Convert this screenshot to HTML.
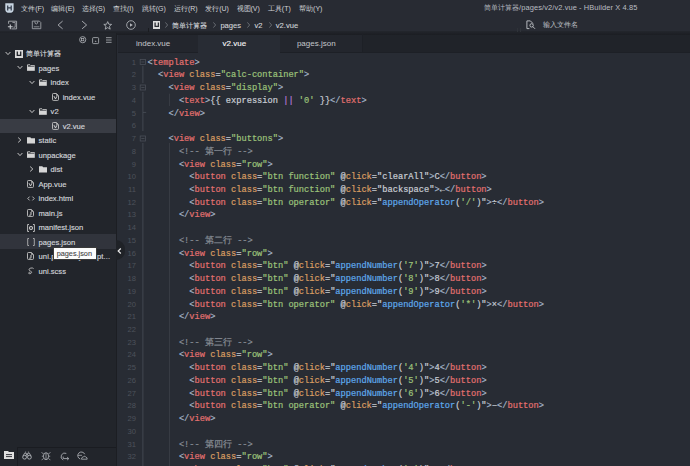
<!DOCTYPE html>
<html><head><meta charset="utf-8">
<style>
*{margin:0;padding:0;box-sizing:border-box}
html,body{width:690px;height:466px;overflow:hidden;background:#282c34;font-family:"Liberation Sans",sans-serif}
.abs{position:absolute}
#top{position:absolute;left:0;top:0;width:690px;height:31px;background:#282b33}
#band{position:absolute;left:0;top:31px;width:690px;height:3.5px;background:linear-gradient(#23262c,#1b1d22)}
.mi{position:absolute;top:3.6px;font-size:7px;line-height:10px;color:#d0d2d6;white-space:nowrap}
#title{position:absolute;left:483.6px;top:3.3px;font-size:7.45px;letter-spacing:0.1px;line-height:10px;color:#b9bcc1;white-space:nowrap}
#side{position:absolute;left:0;top:33px;width:116px;height:433px;background:#22252b}
#sideborder{position:absolute;left:116px;top:33px;width:1.2px;height:433px;background:#1c1e23}
.tt{position:absolute;-webkit-text-stroke:0.15px;font-size:7.6px;line-height:12px;color:#d2d5da;white-space:nowrap}
#tabs{position:absolute;left:117.5px;top:34.5px;width:572.5px;height:17px;background:#202329}
#tabline{position:absolute;left:117.5px;top:51.5px;width:572.5px;height:1px;background:#1d2026}
.tab{position:absolute;top:34.5px;height:17px;font-size:8px;line-height:18.6px;text-align:center;padding-right:9.5px;color:#a8abb1;white-space:nowrap}
#editor{position:absolute;left:117.5px;top:52.5px;width:572.5px;height:414px;background:#282c34}
.cl{position:absolute;-webkit-text-stroke:0.2px;left:147.60px;height:12.73px;line-height:12.73px;font-family:"Liberation Mono",monospace;font-size:8.700px;white-space:pre;color:#c8ccd4}
.ln{position:absolute;left:116px;width:20px;text-align:right;height:12.73px;line-height:12.4px;font-family:"Liberation Sans",sans-serif;font-size:7.6px;color:#4d525b}
.p{color:#a3b3c6}.t{color:#e2706f}.a{color:#d99d62}.s{color:#9cc27a}.q{color:#c8ccd4}.c{color:#878c94}.f{color:#5fa9ec}.u{color:#b77ad6}
</style></head><body>
<div id="top"></div>
<div id="band"></div>
<!-- HBuilder logo -->
<svg class="abs" style="left:4.6px;top:2.8px" width="9" height="10" viewBox="0 0 9 10"><path d="M0.3 0.2H8.6V6.4Q8.6 9.8 4.45 9.8Q0.3 9.8 0.3 6.4Z" fill="#c6d3e0"/><path d="M2.7 2.6V7.6M6.2 2.6V7.6M2.7 4.9H6.2" stroke="#2f3848" stroke-width="1.2"/></svg>
<div class="mi" style="left:21.2px">文件(F)</div><div class="mi" style="left:51.3px">编辑(E)</div><div class="mi" style="left:81.7px">选择(S)</div><div class="mi" style="left:113.0px">查找(I)</div><div class="mi" style="left:141.7px">跳转(G)</div><div class="mi" style="left:173.9px">运行(R)</div><div class="mi" style="left:205.2px">发行(U)</div><div class="mi" style="left:236.5px">视图(V)</div><div class="mi" style="left:267.8px">工具(T)</div><div class="mi" style="left:299.1px">帮助(Y)</div>
<div id="title">简单计算器/pages/v2/v2.vue - HBuilder X 4.85</div>
<!-- toolbar icons -->
<svg class="abs" style="left:7px;top:20px" width="11" height="10" viewBox="0 0 11 10"><path d="M1.6 3.8V1.2H9.6V8.9H4.4" stroke="#a9acb1" stroke-width="0.9" fill="none"/><path d="M5.4 2.5H8.2V7.2H6.4" stroke="#a9acb1" stroke-width="0.8" fill="none"/><path d="M0.9 6.8H5.7M3.3 4.4V9.2" stroke="#c4c7cc" stroke-width="1.1"/></svg>
<svg class="abs" style="left:31px;top:20px" width="11" height="10" viewBox="0 0 11 10"><path d="M1.3 1.1H8.4L9.8 2.5V8.7H1.3Z" stroke="#9da0a6" stroke-width="0.9" fill="none"/><path d="M3.8 1.5Q3.8 4 5.3 4Q6.8 4 6.8 1.5" stroke="#9da0a6" stroke-width="0.9" fill="none"/><path d="M2.8 6.8H8.4" stroke="#9da0a6" stroke-width="0.8"/></svg>
<svg class="abs" style="left:57px;top:20px" width="7" height="10" viewBox="0 0 7 10"><path d="M5.6 1.1L1.1 5L5.6 8.8" stroke="#b4b7bc" stroke-width="0.9" fill="none"/></svg>
<svg class="abs" style="left:80.6px;top:20px" width="7" height="10" viewBox="0 0 7 10"><path d="M1.1 1.1L5.6 5L1.1 8.8" stroke="#b4b7bc" stroke-width="0.9" fill="none"/></svg>
<svg class="abs" style="left:103.4px;top:20.6px" width="10" height="9" viewBox="0 0 10 9"><path d="M4.7 0.6L5.8 3.2L8.6 3.4L6.4 5.2L7.2 8.2L4.7 6.6L2.2 8.2L3 5.2L0.8 3.4L3.6 3.2Z" stroke="#b4b7bc" stroke-width="0.85" fill="none"/></svg>
<svg class="abs" style="left:126.4px;top:20px" width="10" height="10" viewBox="0 0 10 10"><circle cx="5" cy="5" r="4.3" stroke="#b4b7bc" stroke-width="0.85" fill="none"/><path d="M4 3.2V6.8L6.8 5Z" fill="#b4b7bc"/></svg>
<div class="abs" style="left:148.2px;top:27.8px;width:0.8px;height:4px;background:#1a1c20"></div>
<!-- breadcrumb -->
<svg class="abs" style="left:152.7px;top:21px" width="7.5" height="8" viewBox="0 0 7.5 8"><rect width="7.5" height="8" fill="#dcdcdc"/><path d="M2.1 1.5V5.4H5.4V1.5" stroke="#2a2d33" stroke-width="1.3" fill="none"/></svg>
<svg class="abs" style="left:164.6px;top:22px" width="3" height="6" viewBox="0 0 3 6"><path d="M0.4 0.4L2.6 3L0.4 5.6" stroke="#777b82" stroke-width="0.8" fill="none"/></svg>
<div class="abs" style="left:172.2px;top:20.5px;font-size:7px;line-height:10px;color:#d0d3d8;-webkit-text-stroke:0.1px;white-space:nowrap">简单计算器</div>
<svg class="abs" style="left:212.6px;top:22px" width="3" height="6" viewBox="0 0 3 6"><path d="M0.4 0.4L2.6 3L0.4 5.6" stroke="#777b82" stroke-width="0.8" fill="none"/></svg>
<div class="abs" style="left:220.4px;top:20.5px;font-size:7.6px;line-height:10px;color:#d0d3d8;-webkit-text-stroke:0.1px;white-space:nowrap">pages</div>
<svg class="abs" style="left:247.3px;top:22px" width="3" height="6" viewBox="0 0 3 6"><path d="M0.4 0.4L2.6 3L0.4 5.6" stroke="#777b82" stroke-width="0.8" fill="none"/></svg>
<div class="abs" style="left:254.4px;top:20.5px;font-size:7.6px;line-height:10px;color:#d0d3d8;-webkit-text-stroke:0.1px;white-space:nowrap">v2</div>
<svg class="abs" style="left:268.7px;top:22px" width="3" height="6" viewBox="0 0 3 6"><path d="M0.4 0.4L2.6 3L0.4 5.6" stroke="#777b82" stroke-width="0.8" fill="none"/></svg>
<div class="abs" style="left:275.8px;top:20.5px;font-size:7.6px;line-height:10px;color:#d0d3d8;-webkit-text-stroke:0.1px;white-space:nowrap">v2.vue</div>
<!-- search -->
<svg class="abs" style="left:525.6px;top:20.4px" width="10" height="10" viewBox="0 0 10 10"><path d="M3.4 8.6H0.9V0.9H4.4L7 3.5" stroke="#c4c7cc" stroke-width="0.9" fill="none"/><circle cx="5.6" cy="5.4" r="1.7" stroke="#c4c7cc" stroke-width="0.9" fill="none"/><path d="M6.8 6.6L9 8.8" stroke="#c4c7cc" stroke-width="0.9"/></svg>
<div class="abs" style="left:516.8px;top:28px;width:0.6px;height:3.5px;background:#2f3339"></div>
<div class="abs" style="left:519.8px;top:28px;width:0.6px;height:3.5px;background:#2f3339"></div>
<div class="abs" style="left:542.5px;top:20px;font-size:7px;line-height:10px;color:#c0c3c8;white-space:nowrap">输入文件名</div>

<!-- sidebar -->
<div id="side"></div>
<div id="sideborder"></div>
<svg class="abs" style="left:79px;top:36.4px" width="8" height="8" viewBox="0 0 8 8"><circle cx="3.7" cy="3.7" r="3.1" stroke="#b4b7bc" stroke-width="0.8" fill="none"/><rect x="2.6" y="2.6" width="2.2" height="2.2" stroke="#b4b7bc" stroke-width="0.7" fill="none"/></svg>
<svg class="abs" style="left:92.3px;top:36.6px" width="8" height="8" viewBox="0 0 8 8"><rect x="0.6" y="0.6" width="6" height="6" rx="0.8" stroke="#b4b7bc" stroke-width="0.8" fill="none"/><path d="M2.6 4.8H4.6L3.6 3.4Z" fill="#b4b7bc"/></svg>
<svg class="abs" style="left:105.7px;top:37px" width="6" height="7" viewBox="0 0 6 7"><path d="M0 0.7H5.6M0 3H5.6M0 5.3H5.6" stroke="#b4b7bc" stroke-width="0.8"/></svg>
<div class="abs" style="left:0;top:119px;width:115.7px;height:13.6px;background:#393c44"></div>
<div class="abs" style="left:0;top:234.4px;width:115.8px;height:14.3px;background:#31343c"></div>
<svg class="abs" style="left:4.9px;top:50.9px" width="6" height="5" viewBox="0 0 6 5"><path d="M0.6 1L3 3.6L5.4 1" stroke="#cfcfcf" stroke-width="0.95" fill="none"/></svg>
<div class="abs" style="left:14.8px;top:49.6px;line-height:0"><svg width="8" height="8" viewBox="0 0 8 8"><rect x="0" y="0" width="8" height="8" fill="#d9d9d9"/><path d="M2.3 1.6V5.3H5.7V1.6" stroke="#22252b" stroke-width="1.3" fill="none"/></svg></div>
<div class="tt" style="left:26.4px;top:48.4px;font-size:7.05px">简单计算器</div>
<svg class="abs" style="left:17.1px;top:65.4px" width="6" height="5" viewBox="0 0 6 5"><path d="M0.6 1L3 3.6L5.4 1" stroke="#cfcfcf" stroke-width="0.95" fill="none"/></svg>
<div class="abs" style="left:27.0px;top:64.1px;line-height:0"><svg width="8" height="7" viewBox="0 0 8 7"><path d="M0.5 6.5V0.8H3L3.8 1.6H7.5V2.5" stroke="#cfcfcf" stroke-width="0.9" fill="none"/><rect x="0.2" y="2.6" width="7.6" height="4.2" fill="#d6d6d6"/></svg></div>
<div class="tt" style="left:38.5px;top:62.9px">pages</div>
<svg class="abs" style="left:29.3px;top:79.9px" width="6" height="5" viewBox="0 0 6 5"><path d="M0.6 1L3 3.6L5.4 1" stroke="#cfcfcf" stroke-width="0.95" fill="none"/></svg>
<div class="abs" style="left:39.2px;top:78.6px;line-height:0"><svg width="8" height="7" viewBox="0 0 8 7"><path d="M0.5 6.5V0.8H3L3.8 1.6H7.5V2.5" stroke="#cfcfcf" stroke-width="0.9" fill="none"/><rect x="0.2" y="2.6" width="7.6" height="4.2" fill="#d6d6d6"/></svg></div>
<div class="tt" style="left:50.6px;top:77.4px">index</div>
<div class="abs" style="left:51.9px;top:92.7px;line-height:0"><svg width="7" height="8" viewBox="0 0 7 8"><path d="M1.3 0.5H4.4L6.5 2.6V6.6Q6.5 7.4 5.7 7.4H1.3Q0.5 7.4 0.5 6.6V1.3Q0.5 0.5 1.3 0.5Z" stroke="#c4c4c4" stroke-width="0.9" fill="none"/><path d="M4.2 0.6L6.4 2.8H4.2Z" fill="#c4c4c4"/><path d="M2 3.2L3.5 6L5 3.2" stroke="#d0d0d0" stroke-width="1" fill="none"/></svg></div>
<div class="tt" style="left:62.7px;top:91.9px">index.vue</div>
<svg class="abs" style="left:29.3px;top:108.9px" width="6" height="5" viewBox="0 0 6 5"><path d="M0.6 1L3 3.6L5.4 1" stroke="#cfcfcf" stroke-width="0.95" fill="none"/></svg>
<div class="abs" style="left:39.2px;top:107.6px;line-height:0"><svg width="8" height="7" viewBox="0 0 8 7"><path d="M0.5 6.5V0.8H3L3.8 1.6H7.5V2.5" stroke="#cfcfcf" stroke-width="0.9" fill="none"/><rect x="0.2" y="2.6" width="7.6" height="4.2" fill="#d6d6d6"/></svg></div>
<div class="tt" style="left:50.6px;top:106.4px">v2</div>
<div class="abs" style="left:51.9px;top:121.7px;line-height:0"><svg width="7" height="8" viewBox="0 0 7 8"><path d="M1.3 0.5H4.4L6.5 2.6V6.6Q6.5 7.4 5.7 7.4H1.3Q0.5 7.4 0.5 6.6V1.3Q0.5 0.5 1.3 0.5Z" stroke="#c4c4c4" stroke-width="0.9" fill="none"/><path d="M4.2 0.6L6.4 2.8H4.2Z" fill="#c4c4c4"/><path d="M2 3.2L3.5 6L5 3.2" stroke="#d0d0d0" stroke-width="1" fill="none"/></svg></div>
<div class="tt" style="left:62.7px;top:120.9px">v2.vue</div>
<svg class="abs" style="left:17.2px;top:137.1px" width="5" height="6" viewBox="0 0 5 6"><path d="M1.2 0.6L3.8 3L1.2 5.4" stroke="#cfcfcf" stroke-width="0.95" fill="none"/></svg>
<div class="abs" style="left:27.0px;top:136.6px;line-height:0"><svg width="8" height="7" viewBox="0 0 8 7"><path d="M0 0.3H3.3L4.2 1.3H8V6.6H0Z" fill="#d6d6d6"/></svg></div>
<div class="tt" style="left:38.5px;top:135.4px">static</div>
<svg class="abs" style="left:17.1px;top:152.4px" width="6" height="5" viewBox="0 0 6 5"><path d="M0.6 1L3 3.6L5.4 1" stroke="#cfcfcf" stroke-width="0.95" fill="none"/></svg>
<div class="abs" style="left:27.0px;top:151.1px;line-height:0"><svg width="8" height="7" viewBox="0 0 8 7"><path d="M0.5 6.5V0.8H3L3.8 1.6H7.5V2.5" stroke="#cfcfcf" stroke-width="0.9" fill="none"/><rect x="0.2" y="2.6" width="7.6" height="4.2" fill="#d6d6d6"/></svg></div>
<div class="tt" style="left:38.5px;top:149.9px">unpackage</div>
<svg class="abs" style="left:29.4px;top:166.1px" width="5" height="6" viewBox="0 0 5 6"><path d="M1.2 0.6L3.8 3L1.2 5.4" stroke="#cfcfcf" stroke-width="0.95" fill="none"/></svg>
<div class="abs" style="left:39.2px;top:165.6px;line-height:0"><svg width="8" height="7" viewBox="0 0 8 7"><path d="M0 0.3H3.3L4.2 1.3H8V6.6H0Z" fill="#d6d6d6"/></svg></div>
<div class="tt" style="left:50.6px;top:164.4px">dist</div>
<div class="abs" style="left:27.0px;top:179.7px;line-height:0"><svg width="7" height="8" viewBox="0 0 7 8"><path d="M1.3 0.5H4.4L6.5 2.6V6.6Q6.5 7.4 5.7 7.4H1.3Q0.5 7.4 0.5 6.6V1.3Q0.5 0.5 1.3 0.5Z" stroke="#c4c4c4" stroke-width="0.9" fill="none"/><path d="M4.2 0.6L6.4 2.8H4.2Z" fill="#c4c4c4"/><path d="M2 3.2L3.5 6L5 3.2" stroke="#d0d0d0" stroke-width="1" fill="none"/></svg></div>
<div class="tt" style="left:38.5px;top:178.9px">App.vue</div>
<div class="abs" style="left:27.0px;top:194.6px;line-height:0"><svg width="8" height="7" viewBox="0 0 8 7"><path d="M2.6 1.6L0.8 3.5L2.6 5.4M5.4 1.6L7.2 3.5L5.4 5.4" stroke="#c8c8c8" stroke-width="0.9" fill="none"/></svg></div>
<div class="tt" style="left:38.5px;top:193.4px">index.html</div>
<div class="abs" style="left:27.0px;top:208.7px;line-height:0"><svg width="7" height="8" viewBox="0 0 7 8"><path d="M1.3 0.5H4.4L6.5 2.6V6.6Q6.5 7.4 5.7 7.4H1.3Q0.5 7.4 0.5 6.6V1.3Q0.5 0.5 1.3 0.5Z" stroke="#c4c4c4" stroke-width="0.9" fill="none"/><path d="M4.2 0.6L6.4 2.8H4.2Z" fill="#c4c4c4"/><path d="M4 3V5.4Q4 6.2 3.2 6.2H2.3" stroke="#d0d0d0" stroke-width="1" fill="none"/></svg></div>
<div class="tt" style="left:38.5px;top:207.9px">main.js</div>
<div class="abs" style="left:27.0px;top:223.6px;line-height:0"><svg width="8" height="8" viewBox="0 0 8 8"><path d="M2 0.5H0.6V7.5H2M6 0.5H7.4V7.5H6" stroke="#c8c8c8" stroke-width="0.9" fill="none"/><circle cx="4" cy="4" r="1.5" stroke="#d0d0d0" stroke-width="1.1" fill="none"/></svg></div>
<div class="tt" style="left:38.5px;top:222.4px">manifest.json</div>
<div class="abs" style="left:27.0px;top:238.1px;line-height:0"><svg width="8" height="8" viewBox="0 0 8 8"><path d="M2 0.5H0.7V7.5H2M6 0.5H7.3V7.5H6" stroke="#c0c0c0" stroke-width="0.8" fill="none"/></svg></div>
<div class="tt" style="left:38.5px;top:236.9px">pages.json</div>
<div class="abs" style="left:27.0px;top:252.2px;line-height:0"><svg width="7" height="8" viewBox="0 0 7 8"><path d="M1.3 0.5H4.4L6.5 2.6V6.6Q6.5 7.4 5.7 7.4H1.3Q0.5 7.4 0.5 6.6V1.3Q0.5 0.5 1.3 0.5Z" stroke="#c4c4c4" stroke-width="0.9" fill="none"/><path d="M4.2 0.6L6.4 2.8H4.2Z" fill="#c4c4c4"/><path d="M4 3V5.4Q4 6.2 3.2 6.2H2.3" stroke="#d0d0d0" stroke-width="1" fill="none"/></svg></div>
<div class="tt trunc" style="left:38.5px;top:251.4px;letter-spacing:0.1px">uni.promisify.adapt...</div>
<div class="abs" style="left:27.0px;top:267.1px;line-height:0"><svg width="8" height="8" viewBox="0 0 8 8"><path d="M6.6 1.6C5.6 0.3 1.8 1 2 2.8C2.2 4.2 5 4 4.6 5.6C4.2 6.8 2.2 7 1.7 6.3C1.4 5.8 2.4 5 3.3 5.4" stroke="#c8c8c8" stroke-width="0.85" fill="none"/></svg></div>
<div class="tt" style="left:38.5px;top:265.9px">uni.scss</div>
<!-- tooltip -->
<div class="abs" style="left:52.5px;top:247px;width:44px;height:12.8px;background:#fcfcfc;border:0.7px solid #3a3a3a;font-size:7.3px;line-height:11.9px;color:#454545;-webkit-text-stroke:0.1px;padding-left:3.2px;white-space:nowrap">pages.json</div>
<!-- bottom bar -->
<div class="abs" style="left:17.4px;top:447px;width:98.3px;height:0.8px;background:#1a1c21"></div>
<div class="abs" style="left:17px;top:447px;width:0.8px;height:19px;background:#1a1c21"></div>
<svg class="abs" style="left:3.8px;top:451.3px" width="10" height="8" viewBox="0 0 10 8"><path d="M0 0H4L5 1H10V8H0Z" fill="#e0e0e0"/><path d="M2 3.6H8M2 5.6H8" stroke="#22252b" stroke-width="0.9"/></svg>
<svg class="abs" style="left:22px;top:451px" width="10" height="9" viewBox="0 0 10 9"><circle cx="2.6" cy="6.2" r="1.9" stroke="#a9acb1" stroke-width="1" fill="none"/><circle cx="7.4" cy="6.2" r="1.9" stroke="#a9acb1" stroke-width="1" fill="none"/><path d="M1 5L2.6 2.2H4.3L4.6 4.6M9 5L7.4 2.2H5.7L5.4 4.6M3.4 1.6L3.6 0.6M6.6 1.6L6.4 0.6" stroke="#a9acb1" stroke-width="0.9" fill="none"/></svg>
<svg class="abs" style="left:41px;top:451px" width="10" height="10" viewBox="0 0 10 10"><ellipse cx="5" cy="5.2" rx="2.6" ry="3.5" stroke="#a9acb1" stroke-width="0.9" fill="none"/><path d="M5 2V8.6M2.4 3L0.6 1.2M7.6 3L9.4 1.2M2.4 7.4L0.6 9.2M7.6 7.4L9.4 9.2M2.3 5.2H0.8M7.7 5.2H9.2" stroke="#a9acb1" stroke-width="0.8"/></svg>
<svg class="abs" style="left:59px;top:451.5px" width="11" height="9" viewBox="0 0 11 9"><path d="M7.3 1.4A3.6 3.6 0 1 0 4.2 8" stroke="#a9acb1" stroke-width="0.9" fill="none"/><path d="M4.2 4.6V6.6H9.6M8.2 5.2L9.8 6.6L8.2 8" stroke="#a9acb1" stroke-width="0.9" fill="none"/></svg>
<svg class="abs" style="left:77.3px;top:451.2px" width="11" height="9" viewBox="0 0 11 9"><path d="M3.2 8A3.6 3.6 0 1 1 7.7 3.2" stroke="#a9acb1" stroke-width="0.9" fill="none"/><path d="M0.8 4.3H5" stroke="#a9acb1" stroke-width="0.8"/><path d="M4.4 8.2H10.2Q10.4 6.3 8.8 6.2Q8 4.2 6.4 5.8Q4.6 6 4.4 8.2Z" stroke="#a9acb1" stroke-width="0.85" fill="#22252b"/></svg>
<!-- tabs -->
<div id="tabs"></div>
<div id="tabline"></div>
<div class="tab" style="left:117.5px;width:80.8px;color:#c3c6cb;background:#23262d">index.vue</div>
<div class="tab" style="left:198.3px;top:35px;width:81.7px;height:17.5px;line-height:17.6px;background:#282c34;color:#f4f4f4;-webkit-text-stroke:0.12px">v2.vue</div>
<div class="tab" style="left:280px;width:82px;color:#c3c6cb;background:#23262d">pages.json</div>
<div class="abs" style="left:362px;top:34px;width:0.8px;height:17.5px;background:#1d2026"></div>

<!-- editor -->
<div id="editor"></div>
<div class="cl" style="top:56.74px"><span class="p">&lt;</span><span class="t">template</span><span class="p">&gt;</span></div>
<div class="ln" style="top:56.74px">1</div>
<div class="cl" style="top:69.46px"><span class="x">  </span><span class="p">&lt;</span><span class="t">view</span><span class="x"> </span><span class="a">class</span><span class="q">=</span><span class="s">&quot;calc-container&quot;</span><span class="p">&gt;</span></div>
<div class="ln" style="top:69.46px">2</div>
<div class="cl" style="top:82.19px"><span class="x">    </span><span class="p">&lt;</span><span class="t">view</span><span class="x"> </span><span class="a">class</span><span class="q">=</span><span class="s">&quot;display&quot;</span><span class="p">&gt;</span></div>
<div class="ln" style="top:82.19px">3</div>
<div class="cl" style="top:94.92px"><span class="x">      </span><span class="p">&lt;</span><span class="t">text</span><span class="p">&gt;</span><span class="x">{{ expression </span><span class="u">||</span><span class="x"> </span><span class="s">&#x27;0&#x27;</span><span class="x"> }}</span><span class="p">&lt;/</span><span class="t">text</span><span class="p">&gt;</span></div>
<div class="ln" style="top:94.92px">4</div>
<div class="cl" style="top:107.64px"><span class="x">    </span><span class="p">&lt;/</span><span class="t">view</span><span class="p">&gt;</span></div>
<div class="ln" style="top:107.64px">5</div>
<div class="cl" style="top:120.37px"></div>
<div class="ln" style="top:120.37px">6</div>
<div class="cl" style="top:133.10px"><span class="x">    </span><span class="p">&lt;</span><span class="t">view</span><span class="x"> </span><span class="a">class</span><span class="q">=</span><span class="s">&quot;buttons&quot;</span><span class="p">&gt;</span></div>
<div class="ln" style="top:133.10px">7</div>
<div class="cl" style="top:145.83px"><span class="x">      </span><span class="c">&lt;!-- 第一行 --&gt;</span></div>
<div class="ln" style="top:145.83px">8</div>
<div class="cl" style="top:158.55px"><span class="x">      </span><span class="p">&lt;</span><span class="t">view</span><span class="x"> </span><span class="a">class</span><span class="q">=</span><span class="s">&quot;row&quot;</span><span class="p">&gt;</span></div>
<div class="ln" style="top:158.55px">9</div>
<div class="cl" style="top:171.28px"><span class="x">        </span><span class="p">&lt;</span><span class="t">button</span><span class="x"> </span><span class="a">class</span><span class="q">=</span><span class="s">&quot;btn function&quot;</span><span class="x"> </span><span class="q">@</span><span class="a">click</span><span class="q">=</span><span class="q">&quot;clearAll&quot;</span><span class="p">&gt;</span><span class="x">C</span><span class="p">&lt;/</span><span class="t">button</span><span class="p">&gt;</span></div>
<div class="ln" style="top:171.28px">10</div>
<div class="cl" style="top:184.01px"><span class="x">        </span><span class="p">&lt;</span><span class="t">button</span><span class="x"> </span><span class="a">class</span><span class="q">=</span><span class="s">&quot;btn function&quot;</span><span class="x"> </span><span class="q">@</span><span class="a">click</span><span class="q">=</span><span class="q">&quot;backspace&quot;</span><span class="p">&gt;</span><span class="x">←</span><span class="p">&lt;/</span><span class="t">button</span><span class="p">&gt;</span></div>
<div class="ln" style="top:184.01px">11</div>
<div class="cl" style="top:196.73px"><span class="x">        </span><span class="p">&lt;</span><span class="t">button</span><span class="x"> </span><span class="a">class</span><span class="q">=</span><span class="s">&quot;btn operator&quot;</span><span class="x"> </span><span class="q">@</span><span class="a">click</span><span class="q">=</span><span class="q">&quot;</span><span class="f">appendOperator</span><span class="q">(</span><span class="s">&#x27;/&#x27;</span><span class="q">)&quot;</span><span class="p">&gt;</span><span class="x">÷</span><span class="p">&lt;/</span><span class="t">button</span><span class="p">&gt;</span></div>
<div class="ln" style="top:196.73px">12</div>
<div class="cl" style="top:209.46px"><span class="x">      </span><span class="p">&lt;/</span><span class="t">view</span><span class="p">&gt;</span></div>
<div class="ln" style="top:209.46px">13</div>
<div class="cl" style="top:222.19px"></div>
<div class="ln" style="top:222.19px">14</div>
<div class="cl" style="top:234.91px"><span class="x">      </span><span class="c">&lt;!-- 第二行 --&gt;</span></div>
<div class="ln" style="top:234.91px">15</div>
<div class="cl" style="top:247.64px"><span class="x">      </span><span class="p">&lt;</span><span class="t">view</span><span class="x"> </span><span class="a">class</span><span class="q">=</span><span class="s">&quot;row&quot;</span><span class="p">&gt;</span></div>
<div class="ln" style="top:247.64px">16</div>
<div class="cl" style="top:260.37px"><span class="x">        </span><span class="p">&lt;</span><span class="t">button</span><span class="x"> </span><span class="a">class</span><span class="q">=</span><span class="s">&quot;btn&quot;</span><span class="x"> </span><span class="q">@</span><span class="a">click</span><span class="q">=</span><span class="q">&quot;</span><span class="f">appendNumber</span><span class="q">(</span><span class="s">&#x27;7&#x27;</span><span class="q">)&quot;</span><span class="p">&gt;</span><span class="x">7</span><span class="p">&lt;/</span><span class="t">button</span><span class="p">&gt;</span></div>
<div class="ln" style="top:260.37px">17</div>
<div class="cl" style="top:273.10px"><span class="x">        </span><span class="p">&lt;</span><span class="t">button</span><span class="x"> </span><span class="a">class</span><span class="q">=</span><span class="s">&quot;btn&quot;</span><span class="x"> </span><span class="q">@</span><span class="a">click</span><span class="q">=</span><span class="q">&quot;</span><span class="f">appendNumber</span><span class="q">(</span><span class="s">&#x27;8&#x27;</span><span class="q">)&quot;</span><span class="p">&gt;</span><span class="x">8</span><span class="p">&lt;/</span><span class="t">button</span><span class="p">&gt;</span></div>
<div class="ln" style="top:273.10px">18</div>
<div class="cl" style="top:285.82px"><span class="x">        </span><span class="p">&lt;</span><span class="t">button</span><span class="x"> </span><span class="a">class</span><span class="q">=</span><span class="s">&quot;btn&quot;</span><span class="x"> </span><span class="q">@</span><span class="a">click</span><span class="q">=</span><span class="q">&quot;</span><span class="f">appendNumber</span><span class="q">(</span><span class="s">&#x27;9&#x27;</span><span class="q">)&quot;</span><span class="p">&gt;</span><span class="x">9</span><span class="p">&lt;/</span><span class="t">button</span><span class="p">&gt;</span></div>
<div class="ln" style="top:285.82px">19</div>
<div class="cl" style="top:298.55px"><span class="x">        </span><span class="p">&lt;</span><span class="t">button</span><span class="x"> </span><span class="a">class</span><span class="q">=</span><span class="s">&quot;btn operator&quot;</span><span class="x"> </span><span class="q">@</span><span class="a">click</span><span class="q">=</span><span class="q">&quot;</span><span class="f">appendOperator</span><span class="q">(</span><span class="s">&#x27;*&#x27;</span><span class="q">)&quot;</span><span class="p">&gt;</span><span class="x">×</span><span class="p">&lt;/</span><span class="t">button</span><span class="p">&gt;</span></div>
<div class="ln" style="top:298.55px">20</div>
<div class="cl" style="top:311.28px"><span class="x">      </span><span class="p">&lt;/</span><span class="t">view</span><span class="p">&gt;</span></div>
<div class="ln" style="top:311.28px">21</div>
<div class="cl" style="top:324.00px"></div>
<div class="ln" style="top:324.00px">22</div>
<div class="cl" style="top:336.73px"><span class="x">      </span><span class="c">&lt;!-- 第三行 --&gt;</span></div>
<div class="ln" style="top:336.73px">23</div>
<div class="cl" style="top:349.46px"><span class="x">      </span><span class="p">&lt;</span><span class="t">view</span><span class="x"> </span><span class="a">class</span><span class="q">=</span><span class="s">&quot;row&quot;</span><span class="p">&gt;</span></div>
<div class="ln" style="top:349.46px">24</div>
<div class="cl" style="top:362.18px"><span class="x">        </span><span class="p">&lt;</span><span class="t">button</span><span class="x"> </span><span class="a">class</span><span class="q">=</span><span class="s">&quot;btn&quot;</span><span class="x"> </span><span class="q">@</span><span class="a">click</span><span class="q">=</span><span class="q">&quot;</span><span class="f">appendNumber</span><span class="q">(</span><span class="s">&#x27;4&#x27;</span><span class="q">)&quot;</span><span class="p">&gt;</span><span class="x">4</span><span class="p">&lt;/</span><span class="t">button</span><span class="p">&gt;</span></div>
<div class="ln" style="top:362.18px">25</div>
<div class="cl" style="top:374.91px"><span class="x">        </span><span class="p">&lt;</span><span class="t">button</span><span class="x"> </span><span class="a">class</span><span class="q">=</span><span class="s">&quot;btn&quot;</span><span class="x"> </span><span class="q">@</span><span class="a">click</span><span class="q">=</span><span class="q">&quot;</span><span class="f">appendNumber</span><span class="q">(</span><span class="s">&#x27;5&#x27;</span><span class="q">)&quot;</span><span class="p">&gt;</span><span class="x">5</span><span class="p">&lt;/</span><span class="t">button</span><span class="p">&gt;</span></div>
<div class="ln" style="top:374.91px">26</div>
<div class="cl" style="top:387.64px"><span class="x">        </span><span class="p">&lt;</span><span class="t">button</span><span class="x"> </span><span class="a">class</span><span class="q">=</span><span class="s">&quot;btn&quot;</span><span class="x"> </span><span class="q">@</span><span class="a">click</span><span class="q">=</span><span class="q">&quot;</span><span class="f">appendNumber</span><span class="q">(</span><span class="s">&#x27;6&#x27;</span><span class="q">)&quot;</span><span class="p">&gt;</span><span class="x">6</span><span class="p">&lt;/</span><span class="t">button</span><span class="p">&gt;</span></div>
<div class="ln" style="top:387.64px">27</div>
<div class="cl" style="top:400.37px"><span class="x">        </span><span class="p">&lt;</span><span class="t">button</span><span class="x"> </span><span class="a">class</span><span class="q">=</span><span class="s">&quot;btn operator&quot;</span><span class="x"> </span><span class="q">@</span><span class="a">click</span><span class="q">=</span><span class="q">&quot;</span><span class="f">appendOperator</span><span class="q">(</span><span class="s">&#x27;-&#x27;</span><span class="q">)&quot;</span><span class="p">&gt;</span><span class="x">−</span><span class="p">&lt;/</span><span class="t">button</span><span class="p">&gt;</span></div>
<div class="ln" style="top:400.37px">28</div>
<div class="cl" style="top:413.09px"><span class="x">      </span><span class="p">&lt;/</span><span class="t">view</span><span class="p">&gt;</span></div>
<div class="ln" style="top:413.09px">29</div>
<div class="cl" style="top:425.82px"></div>
<div class="ln" style="top:425.82px">30</div>
<div class="cl" style="top:438.55px"><span class="x">      </span><span class="c">&lt;!-- 第四行 --&gt;</span></div>
<div class="ln" style="top:438.55px">31</div>
<div class="cl" style="top:451.27px"><span class="x">      </span><span class="p">&lt;</span><span class="t">view</span><span class="x"> </span><span class="a">class</span><span class="q">=</span><span class="s">&quot;row&quot;</span><span class="p">&gt;</span></div>
<div class="ln" style="top:451.27px">32</div>
<div class="cl" style="top:464.00px"><span class="x">        </span><span class="p">&lt;</span><span class="t">button</span><span class="x"> </span><span class="a">class</span><span class="q">=</span><span class="s">&quot;btn&quot;</span><span class="x"> </span><span class="q">@</span><span class="a">click</span><span class="q">=</span><span class="q">&quot;</span><span class="f">appendNumber</span><span class="q">(</span><span class="s">&#x27;1&#x27;</span><span class="q">)&quot;</span><span class="p">&gt;</span><span class="x">1</span><span class="p">&lt;/</span><span class="t">button</span><span class="p">&gt;</span></div>
<div class="ln" style="top:464.00px">33</div>
<!-- fold markers & guides -->
<svg class="abs" style="left:0;top:0" width="690" height="466" viewBox="0 0 690 466">
<g stroke="#4a4f58" stroke-width="0.8" fill="none">
<rect x="140.2" y="59.5" width="5.4" height="5" />
<path d="M141.3 62H144.5"/>
<rect x="140.2" y="85" width="5.4" height="5" />
<path d="M141.3 87.5H144.5"/>
<rect x="140.2" y="136" width="5.4" height="5" />
<path d="M141.3 138.5H144.5"/>
<path d="M142.9 66V83M142.9 92V131M142.9 112.4H146.2M142.9 143V466"/>
</g>
<g stroke="#3b3f47" stroke-width="0.8">
<path d="M169.5 93.7V106M169.5 143V466"/>
</g>
</svg>
<!-- collapse handle -->
<div class="abs" style="left:115.8px;top:240px;width:9.4px;height:20.2px;border-radius:0 10.1px 10.1px 0/0 10.1px 10.1px 0;background:#1f2227"></div>
<svg class="abs" style="left:116.6px;top:247.6px" width="5" height="6" viewBox="0 0 5 6"><path d="M3.8 0.5L1.2 3L3.8 5.5" stroke="#e8e8e8" stroke-width="1.2" fill="none"/></svg>
</body></html>
